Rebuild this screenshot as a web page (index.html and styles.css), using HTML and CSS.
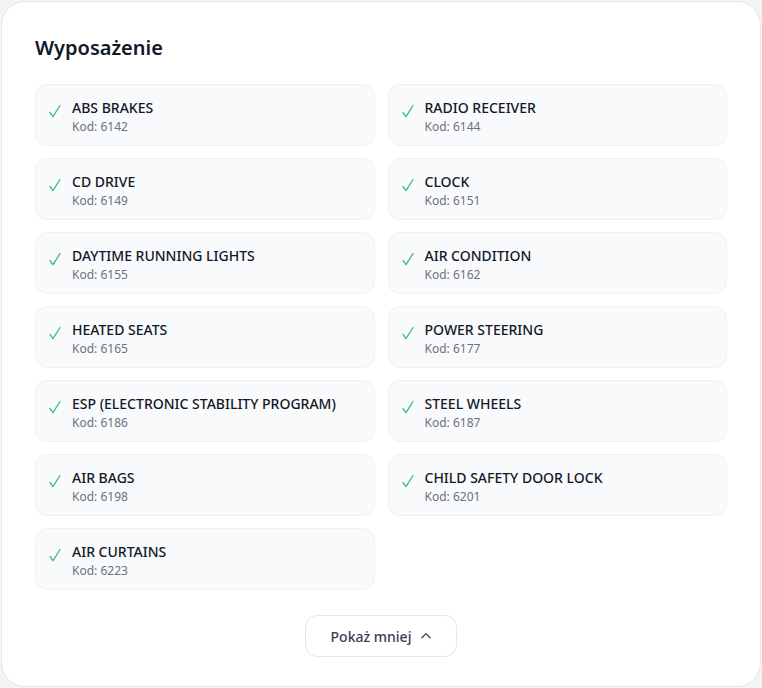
FILE: index.html
```html
<!DOCTYPE html>
<html lang="pl">

<head>
  <meta charset="UTF-8">
  <meta name="viewport" content="width=device-width, initial-scale=1.0">
  <title>Wyposażenie</title>
  <link rel="stylesheet" href="styles.css">
</head>

<body>
  <div class="card">
    <h2 class="title">Wyposażenie</h2>
    <div class="list">
      <div class="item"><span class="check"></span><div><div class="name">ABS BRAKES</div><div class="code">Kod: 6142</div></div></div>
      <div class="item"><span class="check"></span><div><div class="name">RADIO RECEIVER</div><div class="code">Kod: 6144</div></div></div>
      <div class="item"><span class="check"></span><div><div class="name">CD DRIVE</div><div class="code">Kod: 6149</div></div></div>
      <div class="item"><span class="check"></span><div><div class="name">CLOCK</div><div class="code">Kod: 6151</div></div></div>
      <div class="item"><span class="check"></span><div><div class="name">DAYTIME RUNNING LIGHTS</div><div class="code">Kod: 6155</div></div></div>
      <div class="item"><span class="check"></span><div><div class="name">AIR CONDITION</div><div class="code">Kod: 6162</div></div></div>
      <div class="item"><span class="check"></span><div><div class="name">HEATED SEATS</div><div class="code">Kod: 6165</div></div></div>
      <div class="item"><span class="check"></span><div><div class="name">POWER STEERING</div><div class="code">Kod: 6177</div></div></div>
      <div class="item"><span class="check"></span><div><div class="name">ESP (ELECTRONIC STABILITY PROGRAM)</div><div class="code">Kod: 6186</div></div></div>
      <div class="item"><span class="check"></span><div><div class="name">STEEL WHEELS</div><div class="code">Kod: 6187</div></div></div>
      <div class="item"><span class="check"></span><div><div class="name">AIR BAGS</div><div class="code">Kod: 6198</div></div></div>
      <div class="item"><span class="check"></span><div><div class="name">CHILD SAFETY DOOR LOCK</div><div class="code">Kod: 6201</div></div></div>
      <div class="item"><span class="check"></span><div><div class="name">AIR CURTAINS</div><div class="code">Kod: 6223</div></div></div>
    </div>
    <div class="more">
      <button type="button" class="button">
        Pokaż mniej
        <svg width="14" height="14" viewBox="0 0 24 24" fill="none" stroke="currentColor" stroke-width="2.2" stroke-linecap="round" stroke-linejoin="round"><path d="M5 15l7-7 7 7"/></svg>
      </button>
    </div>
  </div>
  <script>
    // checkmarks
    document.querySelectorAll('.check').forEach(el => {
      el.innerHTML = '<svg width="12" height="14" viewBox="0 0 12 14" fill="none" stroke="#3fbb8c" stroke-width="1.3" stroke-linecap="round" stroke-linejoin="round"><path d="M1 8.5l3 4.2L11 1.5"/></svg>'
    })
  </script>
</body>

</html>
```

FILE: styles.css
```css
* {
  padding: 0;
  margin: 0;
  box-sizing: border-box;
}

body {
  background-color: #f3f4f6;
  font-family: "Noto Sans", "Open Sans", sans-serif;
  color: #111827;
}

.card {
  width: 760px;
  min-height: 686px;
  margin: 1px;
  padding: 32px 33px 29px;
  background-color: #fff;
  border: 1px solid #e5e7eb;
  border-radius: 24px;
}

.title {
  font-size: 20px;
  line-height: 28px;
  font-weight: 600;
  margin-bottom: 22px;
}

.list {
  display: grid;
  grid-template-columns: 1fr 1fr;
  gap: 12px 13px;
}

.item {
  display: flex;
  align-items: flex-start;
  gap: 11px;
  padding: 12px 13px 10px;
  height: 62px;
  background-color: #f9fafb;
  border: 1px solid #f0f1f3;
  border-radius: 12px;
}

.check {
  display: flex;
  margin-top: 7px;
}

.name {
  font-size: 14px;
  line-height: 21px;
  font-weight: 500;
  color: #111827;
}

.code {
  font-size: 12px;
  line-height: 18px;
  color: #6b7280;
}

.more {
  display: flex;
  justify-content: center;
  margin-top: 25px;
}

.button {
  display: flex;
  align-items: center;
  gap: 8px;
  height: 42px;
  padding: 0 23px 0 25px;
  background-color: #fff;
  border: 1px solid #e5e7eb;
  border-radius: 12px;
  font-family: inherit;
  font-size: 14px;
  font-weight: 500;
  color: #374151;
  cursor: pointer;
}
```
